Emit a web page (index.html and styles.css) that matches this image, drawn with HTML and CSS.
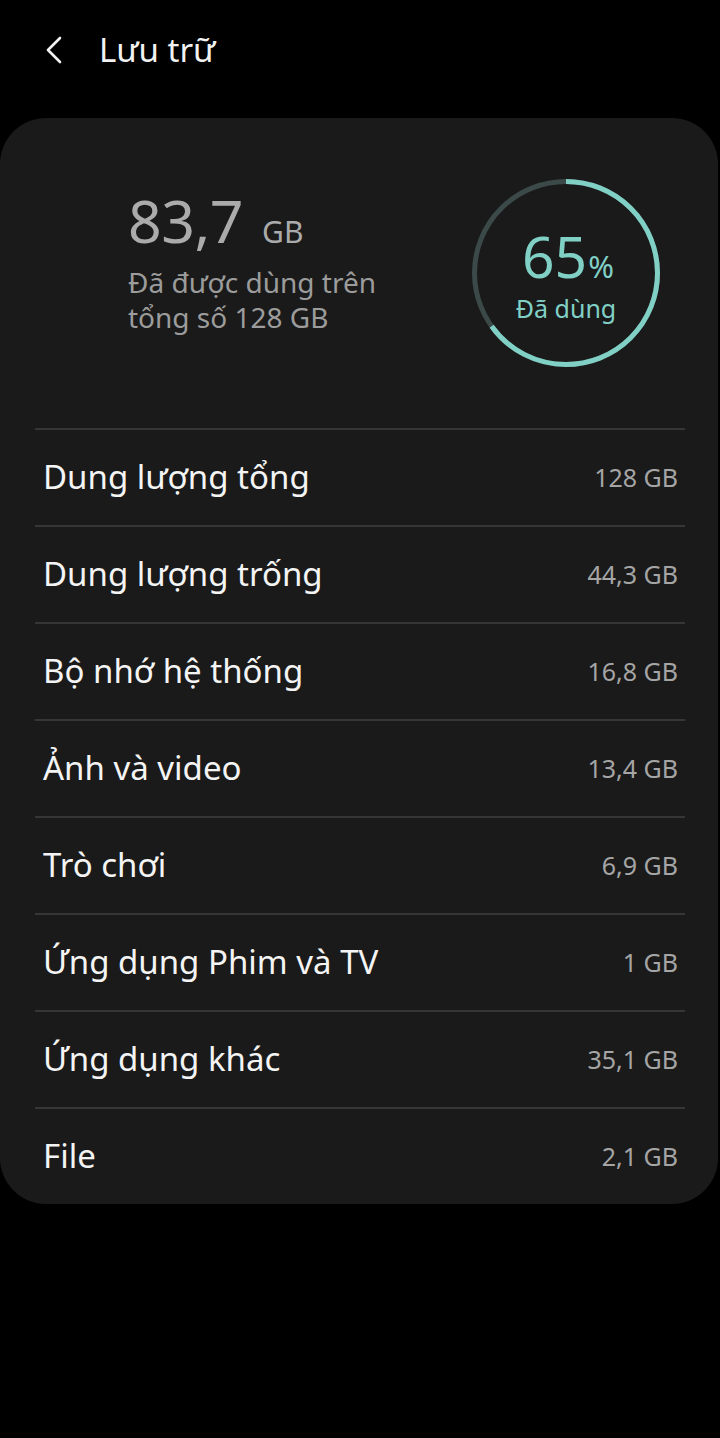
FILE: index.html
```html
<!DOCTYPE html>
<html lang="vi">
<head>
<meta charset="utf-8">
<link rel="stylesheet" href="styles.css">
</head>
<body>
<header class="topbar">
  <svg class="back" width="22" height="30" viewBox="0 0 22 30"><path d="M17 3 L5 15 L17 27" fill="none" stroke="#f2f2f2" stroke-width="2.6" stroke-linecap="round" stroke-linejoin="round"/></svg>
  <h1 class="title">Lưu trữ</h1>
</header>
<main class="card">
  <section class="summary">
    <div class="used">
      <div class="amount"><span class="num">83,7</span><span class="unit">GB</span></div>
      <div class="desc">Đã được dùng trên<br>tổng số 128 GB</div>
    </div>
    <div class="ring">
      <svg width="192" height="192" viewBox="0 0 192 192">
        <circle cx="96" cy="96" r="91.5" fill="none" stroke="#3b4a48" stroke-width="5"/>
        <circle cx="96" cy="96" r="91.5" fill="none" stroke="#80d0c6" stroke-width="5" stroke-dasharray="373.7 600" transform="rotate(-90 96 96)"/>
      </svg>
      <div class="ring-text">
        <div class="pct"><span class="pct-num">65</span><span class="pct-sign">%</span></div>
        <div class="pct-label">Đã dùng</div>
      </div>
    </div>
  </section>
  <ul class="list">
    <li class="row"><span class="label">Dung lượng tổng</span><span class="value">128 GB</span></li>
    <li class="row"><span class="label">Dung lượng trống</span><span class="value">44,3 GB</span></li>
    <li class="row"><span class="label">Bộ nhớ hệ thống</span><span class="value">16,8 GB</span></li>
    <li class="row"><span class="label">Ảnh và video</span><span class="value">13,4 GB</span></li>
    <li class="row"><span class="label">Trò chơi</span><span class="value">6,9 GB</span></li>
    <li class="row"><span class="label">Ứng dụng Phim và TV</span><span class="value">1 GB</span></li>
    <li class="row"><span class="label">Ứng dụng khác</span><span class="value">35,1 GB</span></li>
    <li class="row"><span class="label">File</span><span class="value">2,1 GB</span></li>
  </ul>
</main>
</body>
</html>
```

FILE: styles.css
```css
* { box-sizing: border-box; }
html, body {
  margin: 0;
  padding: 0;
  background: #000;
  font-family: "Noto Sans", "Open Sans", sans-serif;
  color: #f2f2f2;
}
body { width: 720px; height: 1438px; }

.topbar {
  height: 118px;
  display: flex;
  align-items: flex-start;
  padding: 35px 0 0 43px;
}
.back { display: block; }
.title {
  margin: 0 0 0 34px;
  font-size: 33px;
  font-weight: 400;
  line-height: 30px;
  color: #f2f2f2;
}

.card {
  background: #1a1a1a;
  border-radius: 46px;
  margin: 0 2px 0 0;
}

.summary {
  height: 310px;
  display: flex;
  justify-content: space-between;
  padding: 61px 56px 0 128px;
}
.amount {
  display: flex;
  align-items: baseline;
  color: #ababab;
  line-height: 82px;
  height: 82px;
}
.num { font-size: 59px; letter-spacing: -0.5px; }
.unit { font-size: 30px; margin-left: 19px; }
.desc {
  font-size: 28px;
  line-height: 35px;
  color: #9c9c9c;
  margin-top: 4px;
}

.ring {
  position: relative;
  width: 192px;
  height: 192px;
  margin-top: -2px;
}
.ring svg { display: block; }
.ring-text {
  position: absolute;
  inset: 0;
  display: flex;
  flex-direction: column;
  align-items: center;
  justify-content: center;
  color: #80d0c6;
}
.pct { display: flex; align-items: baseline; line-height: 58px; margin-top: 4px; padding-left: 4px; }
.pct-num { font-size: 57px; }
.pct-sign { font-size: 31px; margin-left: 1px; }
.pct-label { font-size: 25px; line-height: 30px; margin-top: -2px; }

.list {
  list-style: none;
  margin: 0 33px 0 35px;
  padding: 0;
}
.row {
  height: 97px;
  border-top: 2px solid #363636;
  display: flex;
  align-items: center;
  justify-content: space-between;
  padding: 0 7px 2px 8px;
}
.label { font-size: 33px; color: #f4f4f4; }
.value { font-size: 25px; color: #a5a5a5; }
```
